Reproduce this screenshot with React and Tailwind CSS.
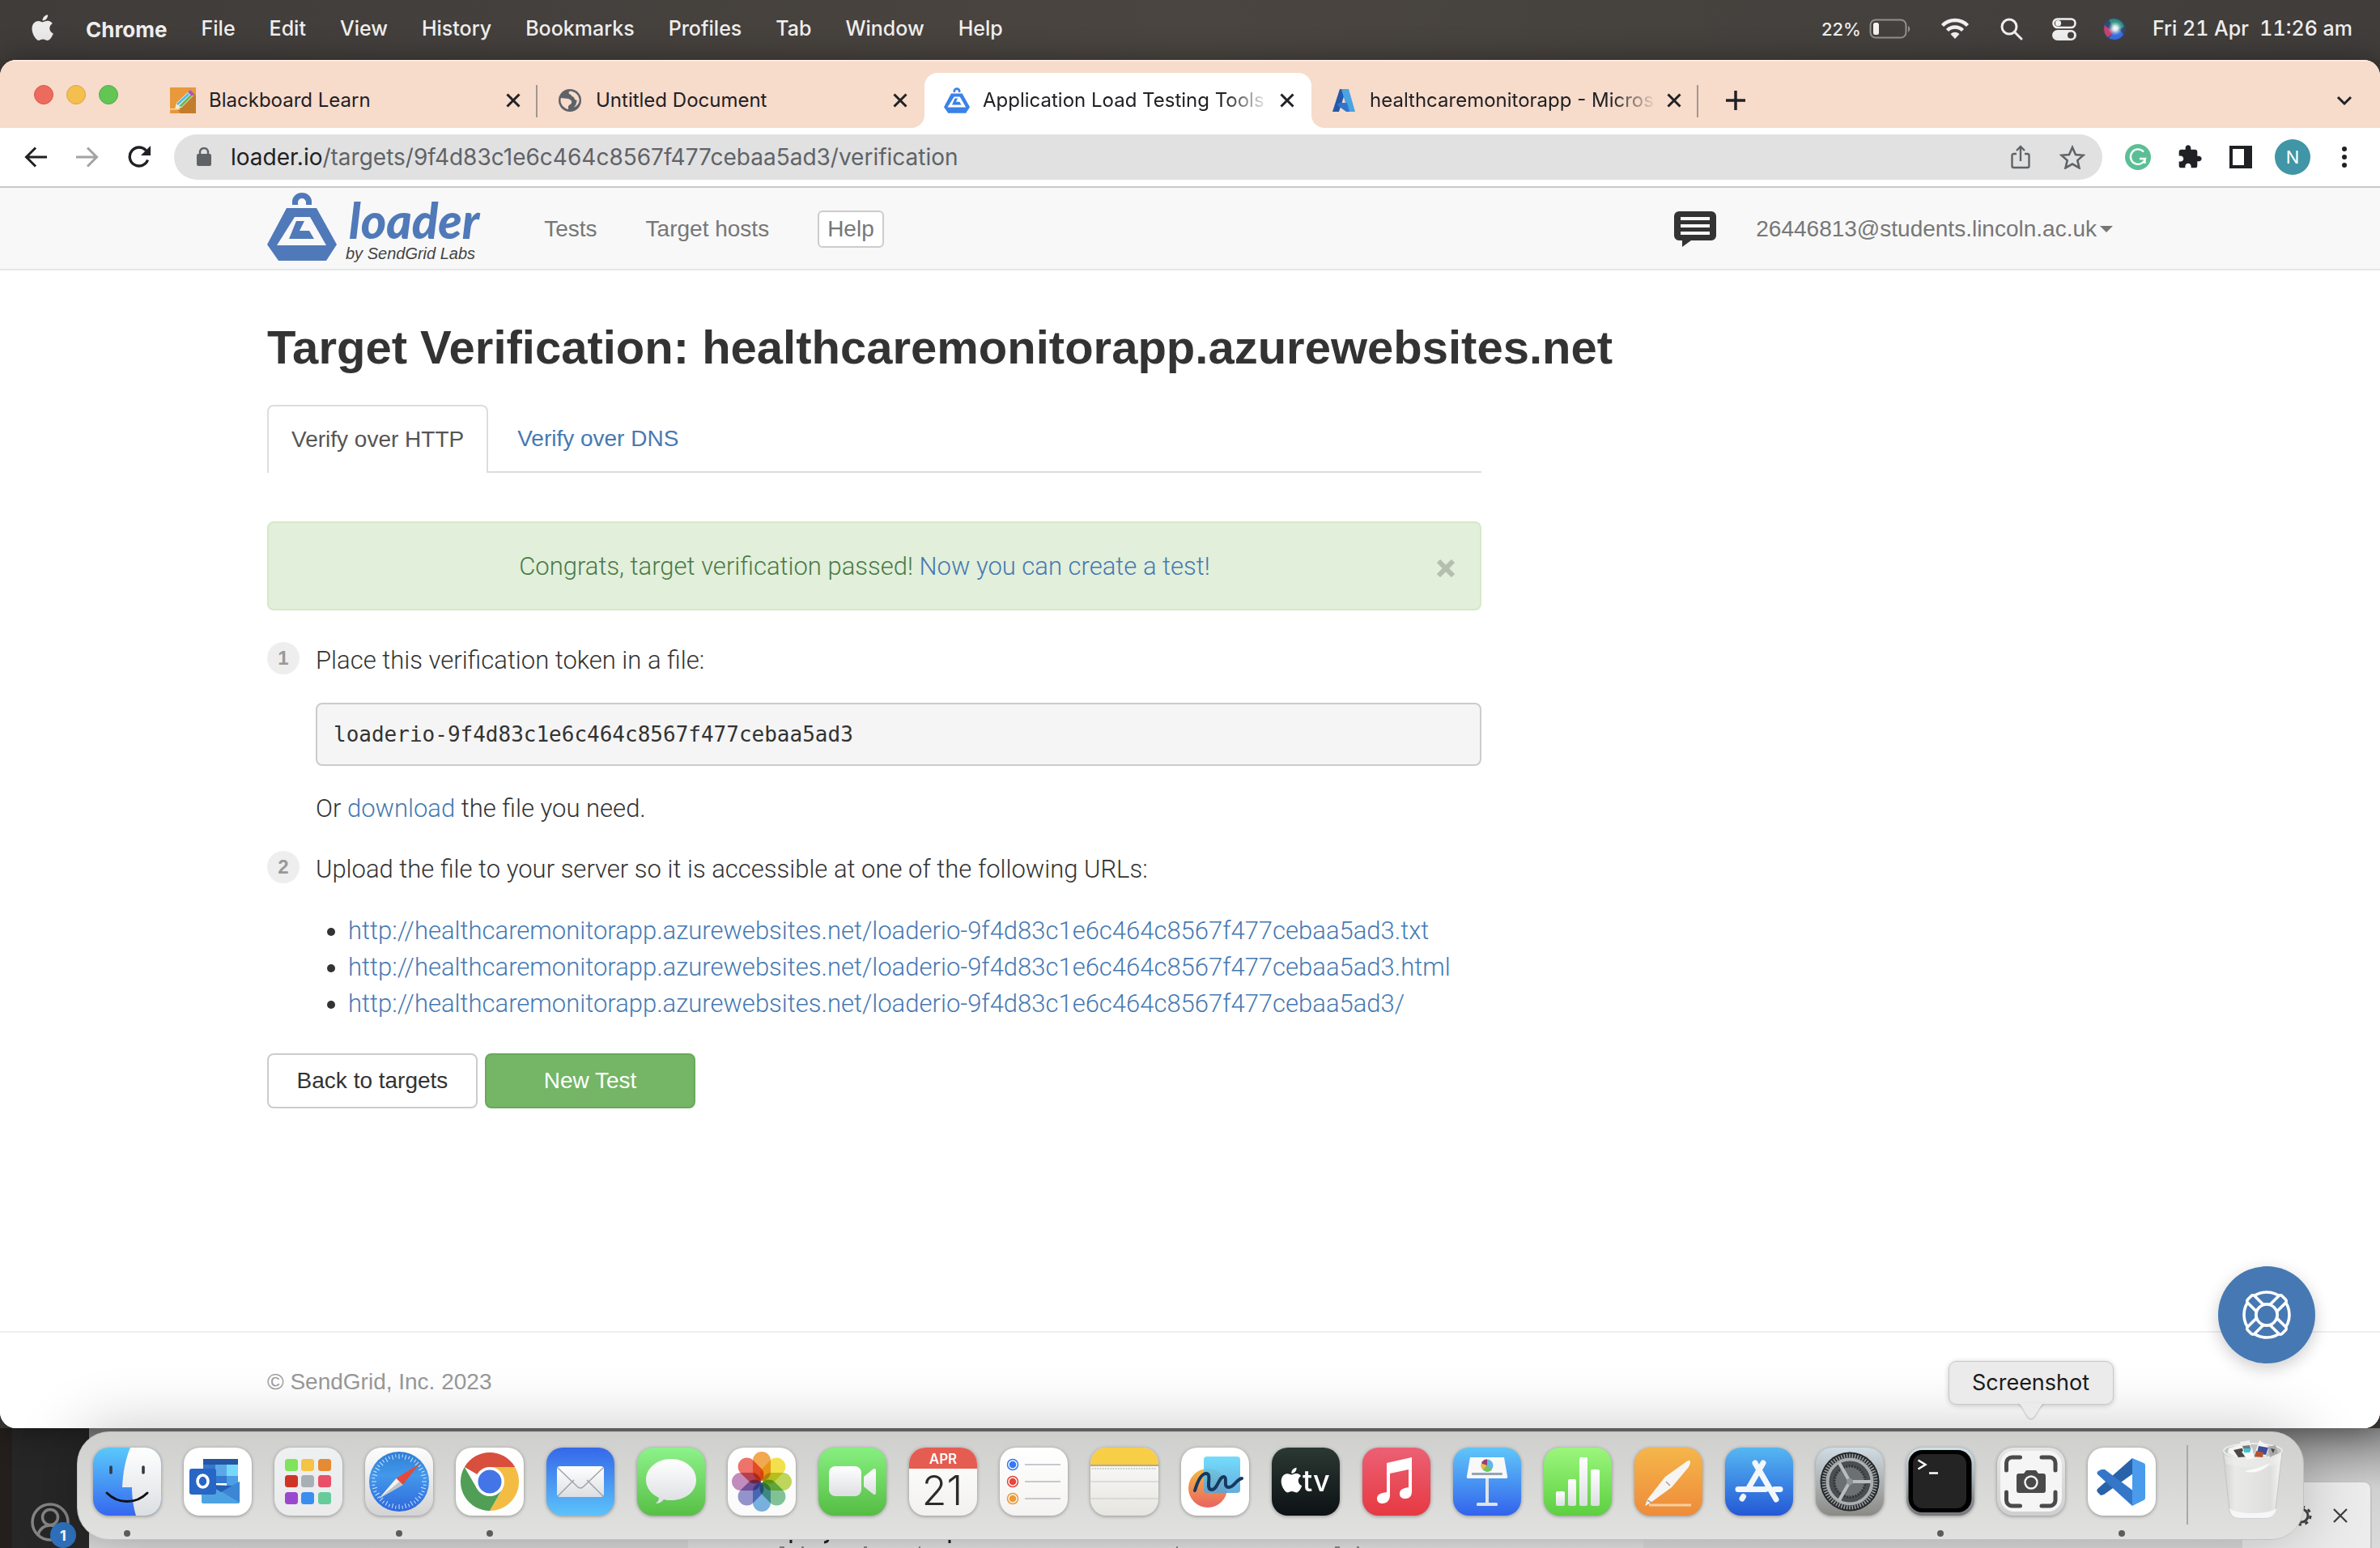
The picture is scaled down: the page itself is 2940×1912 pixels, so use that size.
import React from "react";

const SANS = "font-['Liberation_Sans',Arial,sans-serif]";
const SYSTEM = "font-[Inter,sans-serif]";
const LIGHT = "font-[Roboto,sans-serif] font-light";

const TOKEN = "loaderio-9f4d83c1e6c464c8567f477cebaa5ad3";
const HOST = "http://healthcaremonitorapp.azurewebsites.net/";

/* ---------- shared glyphs ---------- */

const APPLE_PATH =
  "M18.7 12.7c0-2.7 2.2-4 2.3-4.1-1.3-1.8-3.2-2.1-3.9-2.1-1.7-.2-3.2 1-4.1 1-.8 0-2.1-1-3.500-.9-1.800 0-3.500 1-4.400 2.600-1.900 3.300-.5 8.100 1.300 10.700.9 1.300 2 2.800 3.400 2.700 1.400-.1 1.900-.9 3.500-.9 1.700 0 2.100.9 3.600.9 1.500 0 2.400-1.300 3.300-2.600 1-1.500 1.500-3 1.500-3.100-.1 0-2.900-1.100-3-4.200zM16.100 4.900c.7-.9 1.200-2.100 1.100-3.400-1.100.1-2.400.7-3.200 1.600-.7.8-1.300 2.100-1.100 3.300 1.200.1 2.400-.6 3.200-1.500z";

function Close({ size = 18 }) {
  return (
    <svg width={size} height={size} viewBox="0 0 18 18" stroke="#202124" strokeWidth="3" fill="none">
      <path d="M1.500 1.500l15 15M16.500 1.500l-15 15" />
    </svg>
  );
}

function LoaderMark({ width, height, color = "#5079b9", hole = "#f8f8f8" }) {
  return (
    <svg width={width} height={height} viewBox="0 0 86 84">
      <path d="M31 15V11a12 11 0 0 1 24 0v4h-7v-3a5 5 0 0 0-10 0v3z" fill={color} />
      <path d="M24 19h37l25 45-13 20H14L0 64z" fill={color} />
      <path d="M34 30h19l20 35H12z" fill={hole} />
      <path d="M36 35h10l-6 12h12l6 10H27z" fill={color} />
    </svg>
  );
}

/* ---------- menu bar ---------- */

const MENUS = ["File", "Edit", "View", "History", "Bookmarks", "Profiles", "Tab", "Window", "Help"];

function MenuBar() {
  return (
    <header
      className={`${SYSTEM} flex h-[74px] items-center justify-between bg-gradient-to-r from-[#403c3a] via-[#4a4540] to-[#403d3b] pb-[2px] pl-9 pr-[34px] text-[25px] font-medium text-[#f0efee]`}
    >
      <nav className="flex items-center gap-[42px]">
        <button aria-label="Apple menu" className="-mr-1 pb-1">
          <svg width="32" height="36" viewBox="2 0 21 24" fill="#ebebeb">
            <path d={APPLE_PATH} />
          </svg>
        </button>
        <button className="text-[26px] font-bold">Chrome</button>
        {MENUS.map((m) => (
          <button key={m}>{m}</button>
        ))}
      </nav>
      <div className="flex items-center">
        <span className="text-[22px]">22%</span>
        <svg className="ml-[10px]" width="52" height="26" viewBox="0 0 52 26" fill="none">
          <rect x="1.500" y="1.500" width="44" height="22" rx="6.500" stroke="#94908e" strokeWidth="2" />
          <rect x="5" y="5" width="7" height="15" rx="2.500" fill="#f2f2f2" />
          <path d="M48 9c3 1.500 3 6 0 7.500z" fill="#94908e" />
        </svg>
        <svg className="ml-[36px]" width="36" height="28" viewBox="0 0 36 28" fill="none" stroke="#f0f0f0" strokeWidth="4.500">
          <path d="M2.500 9.500a22 22 0 0 1 31 0M8.500 15.500a13.500 13.500 0 0 1 19 0" />
          <path d="M18 26l-5.500-6a8 8 0 0 1 11 0z" fill="#f0f0f0" stroke="none" />
        </svg>
        <svg className="ml-[38px]" width="28" height="28" viewBox="0 0 28 28" fill="none" stroke="#f0f0f0" strokeWidth="3" strokeLinecap="round">
          <circle cx="11" cy="11" r="9" />
          <path d="M18 18l8 8" />
        </svg>
        <svg className="ml-[36px]" width="30" height="28" viewBox="0 0 30 28" fill="none">
          <rect x="1.500" y="1.500" width="27" height="10.500" rx="5.200" stroke="#f0f0f0" strokeWidth="2.600" />
          <circle cx="7.500" cy="6.700" r="3.600" fill="#f0f0f0" />
          <rect x="0" y="15" width="30" height="13" rx="6.500" fill="#f0f0f0" />
          <circle cx="23" cy="21.500" r="4" fill="#45413e" />
        </svg>
        <svg className="ml-[33px]" width="28" height="28" viewBox="0 0 28 28">
          <defs>
            <radialGradient id="siri">
              <stop offset="0" stopColor="#fff" />
              <stop offset=".35" stopColor="#e4f1f5" stopOpacity=".9" />
              <stop offset="1" stopColor="#9cc8dc" stopOpacity="0" />
            </radialGradient>
          </defs>
          <circle cx="14" cy="14" r="14" fill="#2f4a78" />
          <path d="M2 8a14 14 0 0 0 3 16c5-2 8-6 9-10C9 14 4 13 2 8z" fill="#c8436f" />
          <path d="M7 2c7-3 17 1 19 9-4 3-9 3-12 3-3-3-5-7-7-12z" fill="#2f8f79" />
          <path d="M14 14c4 0 9 2 11 7-4 6-13 8-18 4 3-3 5-7 7-11z" fill="#3b6fe0" />
          <circle cx="15" cy="13" r="9" fill="url(#siri)" />
          <circle cx="14" cy="14" r="13.500" fill="none" stroke="#3a4660" />
        </svg>
        <time className="ml-[33px] whitespace-pre tabular-nums">{"Fri 21 Apr  11:26 am"}</time>
      </div>
    </header>
  );
}

/* ---------- tab strip ---------- */

function BlackboardIcon() {
  return (
    <svg width="32" height="32" viewBox="0 0 32 32">
      <rect width="32" height="32" fill="#e9983a" />
      <path d="M8 26L29 7l3 3v22H13z" fill="#c27c2a" />
      <path d="M6 27l2-8L23 5l6 5-15 15z" fill="#f4ead0" />
      <path d="M8 20L22 7l2 2-14 13z" fill="#58b8ea" />
      <path d="M11 23L25 9l2 2-13 13z" fill="#63b958" />
      <path d="M22 6l3-3 5 5-3 3z" fill="#a65bb5" />
      <path d="M0 26h12v1.500H0z" fill="#f7d9a6" />
    </svg>
  );
}

function GlobeIcon() {
  return (
    <svg width="30" height="30" viewBox="0 0 30 30">
      <circle cx="15" cy="15" r="14" fill="#5f6368" />
      <path d="M4 12l9 1c3 1 5 3 4 5-1 3-4 2-4 5v3c-5-1-10-6-9.500-12zM16 3.500c-3 0-3 3-1 4 2 0 2 3 4 3 2 1 1 3 3 4 2 0 2 1 1 3 0 3-2 4-3 6 5-2 7-6 6.500-10-1-6-5-9-10.500-10z" fill="#f7dbcb" />
    </svg>
  );
}

function AzureIcon() {
  return (
    <svg width="30" height="30" viewBox="0 0 30 30">
      <path d="M10 1h8L9 29H1z" fill="#2659a8" />
      <path d="M12 1h9l8 28h-9z" fill="#4ba3e2" />
      <path d="M9 18h10l3 11h-4l-11-8z" fill="#2f76cc" />
    </svg>
  );
}

function TabFoot({ flip }) {
  return (
    <svg
      className={flip ? "absolute bottom-0 left-full" : "absolute bottom-0 right-full"}
      width="16"
      height="16"
      viewBox="0 0 16 16"
      fill="#fff"
    >
      {flip ? <path d="M0 0v16h16A16 16 0 0 1 0 0z" /> : <path d="M16 0v16H0A16 16 0 0 0 16 0z" />}
    </svg>
  );
}

function Tab({ icon, title, active, divider, faded }) {
  return (
    <div
      className={`relative flex h-[68px] max-w-[478px] flex-1 items-center pl-6 pr-[21px] ${
        active ? "rounded-t-[16px] bg-white" : ""
      }`}
    >
      {active && <TabFoot />}
      {active && <TabFoot flip />}
      <span className="flex w-8 shrink-0 justify-center">{icon}</span>
      <button
        className={`ml-4 mr-3 min-w-0 flex-1 whitespace-nowrap text-left ${
          faded ? "[mask-image:linear-gradient(to_right,#000_84%,transparent)]" : ""
        }`}
      >
        {title}
      </button>
      <button aria-label={`Close ${title}`} className="shrink-0">
        <Close />
      </button>
      {divider && <span className="absolute right-0 top-[15px] h-10 w-[2px] bg-[#a3968f]" />}
    </div>
  );
}

function TabStrip() {
  return (
    <div className={`${SYSTEM} flex h-[84px] items-end border-t-2 border-[#fbeae0] bg-[#f7dbcb] text-[24px] text-[#202124]`}>
      <div className="flex h-[82px] w-[186px] shrink-0 items-center gap-4 pl-[42px]">
        <button aria-label="Close window" className="size-6 rounded-full border border-[#d8584c] bg-[#ed6a5e]" />
        <button aria-label="Minimise window" className="size-6 rounded-full border border-[#dca63c] bg-[#f5bf4f]" />
        <button aria-label="Zoom window" className="size-6 rounded-full border border-[#50b043] bg-[#62c554]" />
      </div>
      <div className="flex flex-1 items-end">
        <Tab icon={<BlackboardIcon />} title="Blackboard Learn" divider />
        <Tab icon={<GlobeIcon />} title="Untitled Document" />
        <Tab active faded icon={<LoaderMark width="32" height="32" color="#3b82e8" hole="#fff" />} title="Application Load Testing Tools" />
        <Tab faded icon={<AzureIcon />} title="healthcaremonitorapp - Micros" divider />
        <button aria-label="New tab" className="ml-[34px] flex h-[68px] items-center">
          <svg width="24" height="24" viewBox="0 0 24 24" stroke="#202124" strokeWidth="3.500">
            <path d="M12 0v24M0 12h24" />
          </svg>
        </button>
      </div>
      <button aria-label="Search tabs" className="mr-[34px] flex h-[68px] items-center">
        <svg width="20" height="14" viewBox="0 0 20 14" fill="none" stroke="#202124" strokeWidth="3">
          <path d="M2 3l8 8 8-8" />
        </svg>
      </button>
    </div>
  );
}

/* ---------- toolbar ---------- */

function Toolbar() {
  return (
    <div className={`${SYSTEM} flex h-[74px] items-center border-b-2 border-[#c9c9c9] bg-white pl-[30px] pr-10 text-[28px]`}>
      <button aria-label="Back">
        <svg width="28" height="26" viewBox="0 0 28 26" fill="none" stroke="#202124" strokeWidth="3">
          <path d="M14 1.500L2.500 13 14 24.500M3 13h25" />
        </svg>
      </button>
      <button aria-label="Forward" className="ml-9">
        <svg width="28" height="26" viewBox="0 0 28 26" fill="none" stroke="#a2a3a5" strokeWidth="3">
          <path d="M14 1.500L25.500 13 14 24.500M25 13H0" />
        </svg>
      </button>
      <button aria-label="Reload" className="ml-9">
        <svg width="28" height="28" viewBox="0 0 28 28" fill="none" stroke="#202124" strokeWidth="3.400">
          <path d="M24.500 17.500A11.500 11.500 0 1 1 22.500 6" />
          <path d="M28 0v12H16z" fill="#202124" stroke="none" />
        </svg>
      </button>
      <label className="ml-[29px] flex h-14 flex-1 items-center rounded-full bg-[#e1e1e1] pl-7 pr-[21px]">
        <svg width="18" height="24" viewBox="0 0 18 24">
          <rect x="0" y="8" width="18" height="15" rx="2" fill="#5f6368" />
          <path d="M4 9V6a5 5 0 0 1 10 0v3" fill="none" stroke="#5f6368" strokeWidth="2.400" />
        </svg>
        <span className="ml-6 text-[#202124]">loader.io</span>
        <input
          aria-label="Address"
          className="min-w-0 flex-1 bg-transparent text-[#5f6368] outline-none"
          defaultValue="/targets/9f4d83c1e6c464c8567f477cebaa5ad3/verification"
        />
        <svg width="24" height="30" viewBox="0 0 24 30" fill="none" stroke="#5f6368" strokeWidth="2.400">
          <path d="M7 11H3.500A2 2 0 0 0 1.500 13v13a2 2 0 0 0 2 2h17a2 2 0 0 0 2-2V13a2 2 0 0 0-2-2H17M12 20V2M7 7l5-5 5 5" />
        </svg>
        <svg className="ml-9" width="32" height="30" viewBox="0 0 32 30" fill="none" stroke="#5f6368" strokeWidth="2.600">
          <path d="M16 3l4 9 9.500.8-7.200 6.300 2.200 9.300L16 23.500l-8.500 4.900 2.200-9.300-7.200-6.300L12 12z" />
        </svg>
      </label>
      <button aria-label="Grammarly" className="ml-7">
        <svg width="32" height="32" viewBox="0 0 32 32" fill="none">
          <circle cx="16" cy="16" r="16" fill="#5bbf95" />
          <path d="M23 9.500A9.200 9.200 0 1 0 25 18h-7M24.500 17.500V24" stroke="#fff" strokeWidth="2.400" />
        </svg>
      </button>
      <button aria-label="Extensions" className="ml-8">
        <svg width="32" height="32" viewBox="0 0 24 24" fill="#202124">
          <path d="M20.500 11H19V7c0-1.100-.9-2-2-2h-4V3.500C13 2.120 11.880 1 10.500 1S8 2.120 8 3.500V5H4c-1.100 0-1.990.9-1.990 2v3.800H3.500c1.490 0 2.700 1.210 2.700 2.700s-1.210 2.700-2.700 2.700H2V20c0 1.100.9 2 2 2h3.800v-1.500c0-1.490 1.210-2.700 2.700-2.700s2.700 1.210 2.700 2.700V22H17c1.100 0 2-.9 2-2v-4h1.500c1.380 0 2.500-1.120 2.500-2.500S21.880 11 20.500 11z" />
        </svg>
      </button>
      <button aria-label="Side panel" className="ml-[33px]">
        <svg width="28" height="28" viewBox="0 0 28 28">
          <path d="M0 0h28v28H0zM4 4v20h14V4z" fillRule="evenodd" fill="#202124" />
        </svg>
      </button>
      <button
        aria-label="Profile"
        className="ml-7 flex size-[44px] items-center justify-center rounded-full bg-[#4095a6] text-[22px] text-white"
      >
        N
      </button>
      <button aria-label="Chrome menu" className="ml-[38px]">
        <svg width="8" height="28" viewBox="0 0 8 28" fill="#202124">
          <circle cx="4" cy="4" r="3" />
          <circle cx="4" cy="14" r="3" />
          <circle cx="4" cy="24" r="3" />
        </svg>
      </button>
    </div>
  );
}

/* ---------- web page ---------- */

function SiteNav() {
  return (
    <div className="border-b-2 border-[#e7e7e7] bg-[#f8f8f8] text-[#777]">
      <div className="mx-auto flex h-[100px] max-w-[2280px] items-center text-[28px]">
        <a href="#home" className="flex items-center gap-[11px] pb-1">
          <LoaderMark width="86" height="84" />
          <span className="flex flex-col pt-1">
            <span className="pl-1 font-[Lato,sans-serif] text-[60px] font-black italic leading-[62px] text-[#5079b9]">loader</span>
            <span className="text-[20px] italic leading-5 text-[#444]">by SendGrid Labs</span>
          </span>
        </a>
        <nav className="ml-20 flex items-center pt-[2px]">
          <a href="#tests">Tests</a>
          <a href="#hosts" className="ml-[60px]">Target hosts</a>
          <button className="ml-[60px] h-[46px] rounded-[6px] border-2 border-[#ccc] bg-white px-[10px]">Help</button>
        </nav>
        <div className="ml-auto flex items-center pt-[2px]">
          <button aria-label="Messages">
            <svg width="52" height="44" viewBox="0 0 52 44">
              <path d="M6 0h40a6 6 0 0 1 6 6v24a6 6 0 0 1-6 6H21L10 44v-8H6a6 6 0 0 1-6-6V6a6 6 0 0 1 6-6z" fill="#333" />
              <path d="M8 9h36M8 18h36M8 27h36" stroke="#f8f8f8" strokeWidth="4" />
            </svg>
          </button>
          <button className="ml-[49px] flex items-center gap-1">
            26446813@students.lincoln.ac.uk
            <svg width="16" height="8" viewBox="0 0 16 8" fill="#777">
              <path d="M0 0h16L8 8z" />
            </svg>
          </button>
        </div>
      </div>
    </div>
  );
}

function Step({ number, children }) {
  return (
    <li className="flex gap-5">
      <span className="flex size-10 shrink-0 items-center justify-center rounded-full bg-[#eee] font-['Liberation_Sans',sans-serif] text-[24px] font-bold text-[#999]">
        {number}
      </span>
      <div className="flex-1">{children}</div>
    </li>
  );
}

function Page() {
  return (
    <div className={`${SANS} relative flex flex-1 flex-col bg-white text-[#333]`}>
      <SiteNav />
      <main className="mx-auto w-full max-w-[2280px] flex-1 pt-[62px]">
        <h1 className="whitespace-nowrap text-[58px] font-bold leading-[66px]">
          Target Verification: healthcaremonitorapp.azurewebsites.net
        </h1>
        <div className="w-[1500px] max-w-full">
          <nav className="mt-[38px] flex border-b-2 border-[#ddd] text-[28px]">
            <a
              href="#http"
              className="-mb-[2px] flex h-[84px] items-center rounded-t-[8px] border-2 border-b-0 border-[#ddd] bg-white px-7 text-[#555]"
            >
              Verify over HTTP
            </a>
            <a href="#dns" className="-mb-[2px] flex h-[84px] items-center px-9 text-[#4679b3]">
              Verify over DNS
            </a>
          </nav>
          <div
            role="alert"
            className={`${LIGHT} mt-[60px] flex h-[110px] items-center rounded-[8px] border-2 border-[#d6e9c6] bg-[#e2efda] px-[30px] pt-[2px] text-[31px] text-[#4a7a48]`}
          >
            <p className="flex-1 text-center">
              Congrats, target verification passed!{" "}
              <a href="#new" className="text-[#4679b3]">Now you can create a test!</a>
            </p>
            <button aria-label="Dismiss" className="pt-1">
              <svg width="24" height="22" viewBox="0 0 24 22" stroke="#b5bfae" strokeWidth="6">
                <path d="M3 2l18 18M21 2L3 20" />
              </svg>
            </button>
          </div>
          <ol className={`${LIGHT} mt-[39px] flex flex-col gap-[29px] text-[31px] leading-[46px]`}>
            <Step number="1">
              <p>Place this verification token in a file:</p>
              <pre className="mb-[30px] mt-[29px] flex h-[78px] items-center rounded-[8px] border-2 border-[#ccc] bg-[#f5f5f5] px-5 font-['DejaVu_Sans_Mono',monospace] text-[26px] font-normal">
                {TOKEN}
              </pre>
              <p>
                Or <a href="#download" className="text-[#4679b3]">download</a> the file you need.
              </p>
            </Step>
            <Step number="2">
              <p>Upload the file to your server so it is accessible at one of the following URLs:</p>
              <ul className="mt-[30px] list-disc pl-10 leading-[45px]">
                {[".txt", ".html", "/"].map((end) => (
                  <li key={end}>
                    <a href="#file" className="text-[#4679b3]">{HOST + TOKEN + end}</a>
                  </li>
                ))}
              </ul>
            </Step>
          </ol>
          <div className="mt-[39px] flex gap-[9px] text-[28px]">
            <button className="h-[68px] w-[260px] rounded-[8px] border-2 border-[#ccc] bg-white">Back to targets</button>
            <button className="h-[68px] w-[260px] rounded-[8px] border-2 border-[#68a95a] bg-[#74b566] text-white">New Test</button>
          </div>
        </div>
      </main>
      <footer className="h-[120px] border-t-2 border-[#eee]">
        <p className="mx-auto max-w-[2280px] pt-[43px] text-[28px] leading-9 text-[#999]">© SendGrid, Inc. 2023</p>
      </footer>
      <button
        aria-label="Support"
        className="absolute bottom-20 right-20 flex size-[120px] items-center justify-center rounded-full bg-[#4679b3] shadow-[0_6px_20px_rgba(0,0,0,0.2)]"
      >
        <svg width="64" height="64" viewBox="0 0 64 64" fill="none" stroke="#fff" strokeWidth="3.600">
          <circle cx="32" cy="32" r="28" />
          <circle cx="32" cy="32" r="13" />
          {[45, 135, 225, 315].map((a) => (
            <path key={a} transform={`rotate(${a} 32 32)`} d="M26 20V5a3 3 0 0 1 3-3h6a3 3 0 0 1 3 3v15" fill="#4679b3" />
          ))}
          <circle cx="32" cy="32" r="13" fill="#4679b3" />
        </svg>
      </button>
    </div>
  );
}

/* ---------- dock ---------- */

function Tile({ id, from, to, children }) {
  return (
    <svg width="84" height="84" viewBox="0 0 84 84" className="drop-shadow-[0_1px_2px_rgba(0,0,0,0.35)]">
      <defs>
        <linearGradient id={`${id}-bg`} x1="0" y1="0" x2="0" y2="1">
          <stop offset="0" stopColor={from} />
          <stop offset="1" stopColor={to} />
        </linearGradient>
        <linearGradient id={`${id}-w`} x1="0" y1="0" x2="0" y2="1">
          <stop offset="0" stopColor="#fff" />
          <stop offset="1" stopColor="#dcdfe2" />
        </linearGradient>
        <clipPath id={`${id}-clip`}>
          <rect width="84" height="84" rx="20" />
        </clipPath>
      </defs>
      <g clipPath={`url(#${id}-clip)`}>
        <rect width="84" height="84" fill={`url(#${id}-bg)`} />
        {children}
      </g>
    </svg>
  );
}

const PETALS = [
  ["#f19a2f", 0],
  ["#f2dd2c", 45],
  ["#b5d23f", 90],
  ["#6cbb86", 135],
  ["#62a6df", 180],
  ["#8481c6", 225],
  ["#ba79b4", 270],
  ["#ec5a50", 315],
];

const PAD = [
  ["#7fe35c", 13, 14], ["#f5c445", 33, 14], ["#e68a34", 54, 14],
  ["#cf3527", 13, 34], ["#a9b0b5", 33, 34], ["#e94f68", 54, 34],
  ["#9a49cf", 13, 55], ["#3a8ef0", 33, 55], ["#66cc9a", 54, 55],
];

const range = (n) => Array.from({ length: n }, (_, i) => i);

const APPS = [
  {
    name: "Finder",
    running: true,
    art: (
      <Tile id="finder" from="#5ac8fa" to="#3568ef">
        <path d="M46 0h38v84H53c-3-10-5-22-5-35H36C37 30 40 14 46 0z" fill="url(#finder-w)" />
        <path d="M22 24v7M62 24v7" stroke="#333a40" strokeWidth="3.600" strokeLinecap="round" />
        <path d="M17 56c14 14 36 14 50 0" fill="none" stroke="#111" strokeWidth="3" strokeLinecap="round" />
      </Tile>
    ),
  },
  {
    name: "Outlook",
    art: (
      <Tile id="outlook" from="#ffffff" to="#ffffff">
        <rect x="24" y="14" width="43" height="30" fill="#3478cf" />
        <rect x="24" y="14" width="43" height="7" fill="#2456a2" />
        <path d="M39 21h14v14H39z" fill="#5aa9e6" />
        <path d="M53 21h14v14H53z" fill="#78d8fb" />
        <path d="M53 35h14v12H53z" fill="#4a9fe6" />
        <path d="M22 40l24 14 23-12v25a2 2 0 0 1-2 2H24a2 2 0 0 1-2-2z" fill="#4da3e2" />
        <path d="M46 54l23 14V42z" fill="#3d86d4" />
        <path d="M32 46l14 9 14-8z" fill="#245fb5" />
        <rect x="7" y="26" width="33" height="32" rx="3" fill="#2766c4" />
        <ellipse cx="23.500" cy="41.500" rx="6.500" ry="7.500" fill="none" stroke="#fff" strokeWidth="3.600" />
      </Tile>
    ),
  },
  {
    name: "Launchpad",
    art: (
      <Tile id="launchpad" from="#eef0f1" to="#ebebec">
        {PAD.map(([c, x, y]) => (
          <rect key={c} x={x} y={y} width="16" height="15" rx="3.500" fill={c} />
        ))}
      </Tile>
    ),
  },
  {
    name: "Safari",
    running: true,
    art: (
      <Tile id="safari" from="#fdfdfd" to="#d3d3d5">
        <defs>
          <linearGradient id="safari-dial" x1="0" y1="0" x2="0" y2="1">
            <stop offset="0" stopColor="#2f7fd6" />
            <stop offset=".4" stopColor="#4398ea" />
            <stop offset="1" stopColor="#2f68de" />
          </linearGradient>
        </defs>
        <circle cx="42" cy="42" r="37" fill="url(#safari-dial)" />
        {range(48).map((i) => (
          <path key={i} transform={`rotate(${i * 7.5} 42 42)`} d={i % 2 ? "M42 8v4" : "M42 8v6"} stroke="#cfe6fb" strokeWidth="1" />
        ))}
        <path d="M67 20L46.500 46l-8-8z" fill="#e5493a" />
        <path d="M17 63l29.500-17-8-8z" fill="#f3f3f3" />
        <path d="M17 63l29.500-17-4-4z" fill="#bfc3c8" />
      </Tile>
    ),
  },
  {
    name: "Chrome",
    running: true,
    art: (
      <Tile id="chrome" from="#ffffff" to="#fdfdfd">
        <path d="M42 42L10.800 24A36 36 0 0 1 73.200 24z" fill="#d94f3d" />
        <path d="M42 24h31.200A36 36 0 0 1 42 78l16-27z" fill="#f2bd42" />
        <path d="M10.800 24A36 36 0 0 0 42 78l15.600-27L42 58 26.400 51z" fill="#519e56" />
        <path d="M42 24h31.200L58 51z" fill="#f2bd42" />
        <circle cx="42" cy="42" r="18" fill="#fff" />
        <circle cx="42" cy="42" r="14.500" fill="#4475e8" />
      </Tile>
    ),
  },
  {
    name: "Mail",
    art: (
      <Tile id="mail" from="#3568ea" to="#5cc3fa">
        <rect x="13" y="23" width="58" height="38" rx="4" fill="url(#mail-w)" />
        <path d="M14 60l20-20M70 60L50 40M14 25l24 23c2.500 2.500 5.500 2.500 8 0l24-23" fill="none" stroke="#a2a6ac" strokeWidth="1.600" />
      </Tile>
    ),
  },
  {
    name: "Messages",
    art: (
      <Tile id="messages" from="#8df28a" to="#57bf45">
        <path d="M42 14c17 0 31 11 31 26S59 65 42 65c-3 0-6 0-9-1-2 3-6 5-10 5 2-2 4-4 4-7-9-4-16-12-16-22 0-15 14-26 31-26z" fill="url(#messages-w)" />
      </Tile>
    ),
  },
  {
    name: "Photos",
    art: (
      <Tile id="photos" from="#ffffff" to="#fafafa">
        {PETALS.map(([c, a]) => (
          <rect key={a} x="31" y="5" width="22" height="36" rx="11" fill={c} opacity=".85" transform={`rotate(${a} 42 42)`} className="mix-blend-multiply" />
        ))}
      </Tile>
    ),
  },
  {
    name: "FaceTime",
    art: (
      <Tile id="facetime" from="#86ef80" to="#55bd43">
        <rect x="13" y="23" width="40" height="37" rx="8" fill="url(#facetime-w)" />
        <path d="M56 36l11-9c2-2 4-1 4 1v28c0 2-2 3-4 1l-11-9z" fill="url(#facetime-w)" />
      </Tile>
    ),
  },
  {
    name: "Calendar",
    art: (
      <Tile id="calendar" from="#ffffff" to="#f2f1ef">
        <rect width="84" height="26" fill="#e55d51" />
        <text x="42" y="20" textAnchor="middle" fontFamily="Inter, sans-serif" fontWeight="600" fontSize="17" fill="#fff">APR</text>
        <text x="41" y="71" textAnchor="middle" fontFamily="Inter, sans-serif" fontWeight="300" fontSize="50" fill="#2b2b2b">21</text>
      </Tile>
    ),
  },
  {
    name: "Reminders",
    art: (
      <Tile id="reminders" from="#ffffff" to="#f4f3f1">
        {[["#3478f6", 21], ["#e8463a", 42], ["#ec9a34", 63]].map(([c, y]) => (
          <g key={c}>
            <circle cx="16" cy={y} r="6.500" fill="none" stroke={c} strokeWidth="1.500" />
            <circle cx="16" cy={y} r="4.300" fill={c} />
            <path d={`M31 ${y}h44`} stroke="#b7b7bf" strokeWidth="1.600" />
          </g>
        ))}
      </Tile>
    ),
  },
  {
    name: "Notes",
    art: (
      <Tile id="notes" from="#fdfdfd" to="#e6e5df">
        <rect width="84" height="21" fill="#f7ce46" />
        <rect y="21" width="84" height="2" fill="#b3aa96" />
        <path d="M2 26h80" stroke="#b9b8b4" strokeWidth="1.600" strokeDasharray="1.600 1.600" />
        <path d="M0 42h84M0 63h84" stroke="#d5d4d1" strokeWidth="1.600" />
      </Tile>
    ),
  },
  {
    name: "Freeform",
    art: (
      <Tile id="freeform" from="#ffffff" to="#ffffff">
        <defs>
          <linearGradient id="ff-sun" x1="0" y1="0" x2="0" y2="1">
            <stop offset="0" stopColor="#f4b942" />
            <stop offset="1" stopColor="#ea6361" />
          </linearGradient>
          <linearGradient id="ff-card" x1="0" y1="0" x2="0" y2="1">
            <stop offset="0" stopColor="#65d8fb" />
            <stop offset="1" stopColor="#55a4d8" />
          </linearGradient>
        </defs>
        <circle cx="33" cy="50" r="24" fill="url(#ff-sun)" />
        <rect x="28" y="11" width="45" height="45" rx="4" fill="url(#ff-card)" opacity=".9" />
        <path d="M17 53c3-10 8-21 14-21 8 0-2 20 7 20 7 0 9-17 15-16 5 1-2 13 6 13 7 0 8-9 16-11" fill="none" stroke="#16395f" strokeWidth="4" strokeLinecap="round" />
      </Tile>
    ),
  },
  {
    name: "TV",
    art: (
      <Tile id="tv" from="#2b3833" to="#0d1114">
        <svg x="11" y="24" width="27" height="32" viewBox="4 1 18 22" fill="#fff">
          <path d={APPLE_PATH} />
        </svg>
        <text x="38" y="54" fontFamily="Inter, sans-serif" fontWeight="500" fontSize="36" fill="#fff">tv</text>
      </Tile>
    ),
  },
  {
    name: "Music",
    art: (
      <Tile id="music" from="#ec6074" to="#e63a42">
        <path d="M30 19l31-7v42c0 6-3 9-8 9-4 0-7-2-7-6 0-5 4-7 11-8V27l-23 5v27c0 6-4 10-9 10-4 0-7-2-7-6 0-5 4-7 12-8z" fill="#fff" />
      </Tile>
    ),
  },
  {
    name: "Keynote",
    art: (
      <Tile id="keynote" from="#5fc6f9" to="#3263ec">
        <path d="M42 37v32" stroke="#dfe3e8" strokeWidth="4" />
        <rect x="29" y="68" width="26" height="4" rx="1.500" fill="#e0e2e5" />
        <path d="M21 12h42l4 23a2 2 0 0 1-2 3H19a2 2 0 0 1-2-3z" fill="#f8f8f8" />
        <rect x="23" y="31" width="38" height="3" rx="1" fill="#93a5b3" />
        <circle cx="42" cy="22" r="7.500" fill="#5cb9e8" />
        <path d="M42 22v-7.500a7.500 7.500 0 0 0-7 5z" fill="#9c3a78" />
        <path d="M42 22l-7-2.500a7.500 7.500 0 0 0 2 8z" fill="#f0b844" />
        <path d="M42 22l-5 5.500a7.500 7.500 0 0 0 11 0z" fill="#76c35c" />
      </Tile>
    ),
  },
  {
    name: "Numbers",
    art: (
      <Tile id="numbers" from="#9bf67c" to="#5dcf41">
        <rect x="15" y="54" width="11" height="18" rx="2" fill="url(#numbers-w)" />
        <rect x="30" y="39" width="10" height="33" rx="2" fill="url(#numbers-w)" />
        <rect x="44" y="12" width="10" height="60" rx="2" fill="url(#numbers-w)" />
        <rect x="58" y="27" width="11" height="45" rx="2" fill="url(#numbers-w)" />
      </Tile>
    ),
  },
  {
    name: "Pages",
    art: (
      <Tile id="pages" from="#f5b64a" to="#ee8b3a">
        <path d="M18 71h52" stroke="#f8cf9e" strokeWidth="3" />
        <path d="M68 16c2 1 1 4-1 8L46 49 20 68l-7 4 3-8 22-28 24-17c3-2 5-4 6-3z" fill="#f7f5f3" />
        <path d="M39 42l5 5M16 65l5 3" stroke="#a8a29b" strokeWidth="1.600" />
      </Tile>
    ),
  },
  {
    name: "App Store",
    art: (
      <Tile id="appstore" from="#55b7f2" to="#2458d6">
        <g stroke="#f3f7fb" strokeWidth="7" strokeLinecap="round">
          <path d="M47 19L29 50M22.500 60.500L21 63M37 19l26 45M16 51.500h34M61 51.500h7" />
        </g>
      </Tile>
    ),
  },
  {
    name: "System Settings",
    art: (
      <Tile id="settings" from="#cfdce3" to="#8b8a86">
        <circle cx="42" cy="42" r="36.500" fill="#26282a" />
        {range(60).map((i) => (
          <path key={i} transform={`rotate(${i * 6} 42 42)`} d="M42 7.500v5" stroke="#9ba0a3" strokeWidth="1.600" />
        ))}
        <circle cx="42" cy="42" r="27.500" fill="#4a4e51" stroke="#a9aeb1" strokeWidth="4" />
        <circle cx="42" cy="42" r="19" fill="#6b7073" stroke="#303335" strokeWidth="3" strokeDasharray="2 1.500" />
        <path d="M42 42h26M42 42L29 19M42 42L29 65" stroke="#b9bdc0" strokeWidth="4" />
        <circle cx="42" cy="42" r="4" fill="#8d9295" />
      </Tile>
    ),
  },
  {
    name: "Terminal",
    running: true,
    art: (
      <Tile id="terminal" from="#cfe2e8" to="#77767a">
        <rect x="2.500" y="3" width="78" height="77" rx="17" fill="#000" />
        <rect x="8" y="8" width="66" height="67" rx="12" fill="#242424" />
        <path d="M14.500 15.500l9 5.500-9 5.500M28 31.500h11" fill="none" stroke="#fff" strokeWidth="2.400" />
      </Tile>
    ),
  },
  {
    name: "Screenshot",
    label: true,
    art: (
      <Tile id="screenshot" from="#e6e6e6" to="#cfcfcf">
        <rect x="4" y="4" width="76" height="75" rx="17" fill="#f5f5f5" />
        <g fill="none" stroke="#4a4a4a" strokeWidth="5" strokeLinecap="round">
          <path d="M11.500 28v-9a7 7 0 0 1 7-7h10M55 12h10a7 7 0 0 1 7 7v9M72 55v10a7 7 0 0 1-7 7H55M28.500 72h-10a7 7 0 0 1-7-7V55" />
        </g>
        <path d="M27 32h6l3-4h12l3 4h6a3 3 0 0 1 3 3v18a3 3 0 0 1-3 3H27a3 3 0 0 1-3-3V35a3 3 0 0 1 3-3z" fill="#4a4a4a" />
        <circle cx="42" cy="43" r="7.500" fill="#4a4a4a" stroke="#f5f5f5" strokeWidth="2.400" />
      </Tile>
    ),
  },
  {
    name: "Visual Studio Code",
    running: true,
    art: (
      <Tile id="vscode" from="#ffffff" to="#ffffff">
        <path d="M55 13L12 51a3 3 0 0 0 0 4l4 4 4-1 36-26z" fill="#2863a9" />
        <path d="M55 72L12 33a3 3 0 0 1 1-4l4-2h4l36 27z" fill="#3477c8" />
        <path d="M55 13l14 6a3 3 0 0 1 2 3v40a3 3 0 0 1-2 3l-14 7z" fill="#4a9bec" />
      </Tile>
    ),
  },
];

function Trash() {
  return (
    <svg width="76" height="98" viewBox="0 0 76 98">
      <defs>
        <linearGradient id="bin" x1="0" y1="0" x2="1" y2="0">
          <stop offset="0" stopColor="#cfcfcf" />
          <stop offset=".2" stopColor="#e9e9e8" />
          <stop offset=".8" stopColor="#dededd" />
          <stop offset="1" stopColor="#f6f6f6" />
        </linearGradient>
      </defs>
      <path d="M1 14h73l-8 72c-1 7-7 10-13 10H22c-7 0-12-3-13-10z" fill="url(#bin)" stroke="#c4c4c4" />
      <ellipse cx="38" cy="13" rx="36" ry="9" fill="#c4c4c3" stroke="#ececec" strokeWidth="2" />
      <path d="M8 10l14-5 8 8-10 8-13-5z" fill="#f4f4f4" />
      <path d="M14 12l14-3 4 11-12 1z" fill="#4d4745" />
      <path d="M22 2l12-2 2 12-10 1z" fill="#eee" />
      <path d="M25 7l9-1 1 4-8 2z" fill="#777" />
      <path d="M24 14l13-5 3 13-9 2z" fill="#f8f8f8" />
      <path d="M27 10h9l-2 5h-7z" fill="#3dc3d6" />
      <path d="M46 0l12 8-4 12-14-3z" fill="#f5f5f5" />
      <path d="M45 7l12 2-3 9-11-2z" fill="#3d4f96" />
      <path d="M42 13l9 2-1 6-10-1z" fill="#b5542e" />
      <path d="M57 8l9-2 3 10-10 5z" fill="#a8a8a8" />
      <path d="M60 10l5 1-2 5z" fill="#444" />
      <path d="M3 19c20 6 50 6 70 0l-1 9c-20 8-48 7-67 1z" fill="#efefef" opacity=".5" />
      <path d="M28 38c10 4 24 0 31-10-8 5-20 7-31 10z" fill="#fff" opacity=".8" />
      <path d="M9 84c10 8 48 8 58 0-1 8-6 12-14 12H22c-8 0-12-4-13-12z" fill="#f5f6f8" />
    </svg>
  );
}

function Dock() {
  return (
    <nav
      aria-label="Dock"
      className="z-20 col-start-1 row-start-1 mx-auto mt-1 flex h-[134px] items-start self-start rounded-[40px] border border-[#c2c2c2] bg-gradient-to-b from-[#cfcfce] via-[#d8d8d7] to-[#e1e1e0] pl-[19px] pr-6 pt-[19px] shadow-[0_0_80px_rgba(0,0,0,0.24)]"
    >
      <ul className="flex gap-7">
        {APPS.map((app) => (
          <li key={app.name} className="relative flex flex-col items-center">
            {app.label && (
              <span
                role="tooltip"
                className={`${SYSTEM} absolute bottom-full mb-[53px] flex h-[54px] w-[204px] items-center justify-center rounded-[10px] border border-[#c8c8c8] bg-[#ebebeb] text-[27px] text-[#1a1a1a] shadow-[0_1px_6px_rgba(0,0,0,0.2)]`}
              >
                {app.name}
                <svg
                  className="absolute top-full -mt-px drop-shadow-[0_1px_1px_rgba(0,0,0,0.25)]"
                  width="34"
                  height="20"
                  viewBox="0 0 34 20"
                >
                  <path d="M0 0c6 0 11 19 17 19S28 0 34 0z" fill="#ebebeb" />
                </svg>
              </span>
            )}
            <button aria-label={app.name} className="flex">{app.art}</button>
            {app.running && <span className="mt-[18px] size-2 rounded-full bg-[#5c5c5c]" />}
          </li>
        ))}
      </ul>
      <span className="ml-[38px] mt-[-3px] h-[98px] w-[2px] bg-[#a9a9a8]" />
      <button aria-label="Bin" className="ml-[42px] mt-[-9px]">
        <Trash />
      </button>
    </nav>
  );
}

/* Windows that peek out from behind the browser and the dock. */
function Backdrop() {
  return (
    <div className="col-start-1 row-start-1 flex overflow-hidden bg-[#dadada]">
      <div className="w-[15px] bg-[#241f1c]" />
      <div className="relative flex w-[95px] items-start bg-[#272727] pl-[22px] pt-[91px]">
        <svg width="52" height="50" viewBox="0 0 52 50" fill="none" stroke="#858585" strokeWidth="3.500">
          <circle cx="25" cy="25" r="22" />
          <circle cx="25" cy="19" r="9.500" />
          <path d="M10 41c2-8 8-12 15-12s13 4 15 12" />
        </svg>
        <span
          className={`${SYSTEM} absolute bottom-0 right-4 flex size-8 items-center justify-center rounded-full bg-[#2f72bd] text-[18px] font-bold text-white`}
        >
          1
        </span>
      </div>
      <div className="w-[740px] bg-gradient-to-b from-[#8c8c8c] to-[#d9d9d9]" />
      <div className="flex w-[1180px] items-end bg-gradient-to-b from-[#8c8c8c] to-[#e4e4e4]">
        <svg width="900" height="12" viewBox="0 0 900 12">
          <path d="M127 0v6M323 0v6M173 0c0 3-1 5-5 5" fill="none" stroke="#222" strokeWidth="3" />
          <path d="M113 11h6M140 11h3M217 11h4M285 11h2M603 11h2M799 11h6M826 11h3" stroke="#888" strokeWidth="2" />
        </svg>
      </div>
      <div className="flex flex-1 items-end justify-end bg-gradient-to-b from-[#8c8c8c] via-[#d0d0d0] to-[#dadada] pr-[10px]">
        <div className="flex h-[83px] w-[160px] items-start justify-end gap-[26px] rounded-tr-[10px] border-r-2 border-t-2 border-[#c4c4c4] bg-[#ececec] pr-7 pt-[28px]">
          <svg width="26" height="26" viewBox="0 0 26 26" fill="none" stroke="#444" strokeWidth="3">
            <circle cx="13" cy="13" r="8" />
            <circle cx="13" cy="13" r="11" strokeDasharray="4 4.600" />
          </svg>
          <button aria-label="Close panel" className="mt-1">
            <svg width="18" height="18" viewBox="0 0 18 18" stroke="#3c3c3c" strokeWidth="2.200">
              <path d="M1 1l16 16M17 1L1 17" />
            </svg>
          </button>
        </div>
      </div>
    </div>
  );
}

export default function App() {
  return (
    <div className="grid min-h-screen grid-cols-[minmax(0,1fr)] grid-rows-[auto_1fr_148px] overflow-hidden bg-[#3e3a38]">
      <MenuBar />
      <section className="z-10 flex flex-col overflow-hidden rounded-[20px] bg-white shadow-[0_4px_40px_rgba(0,0,0,0.45)]">
        <TabStrip />
        <Toolbar />
        <Page />
      </section>
      <div className="grid grid-cols-1">
        <Backdrop />
        <Dock />
      </div>
    </div>
  );
}
